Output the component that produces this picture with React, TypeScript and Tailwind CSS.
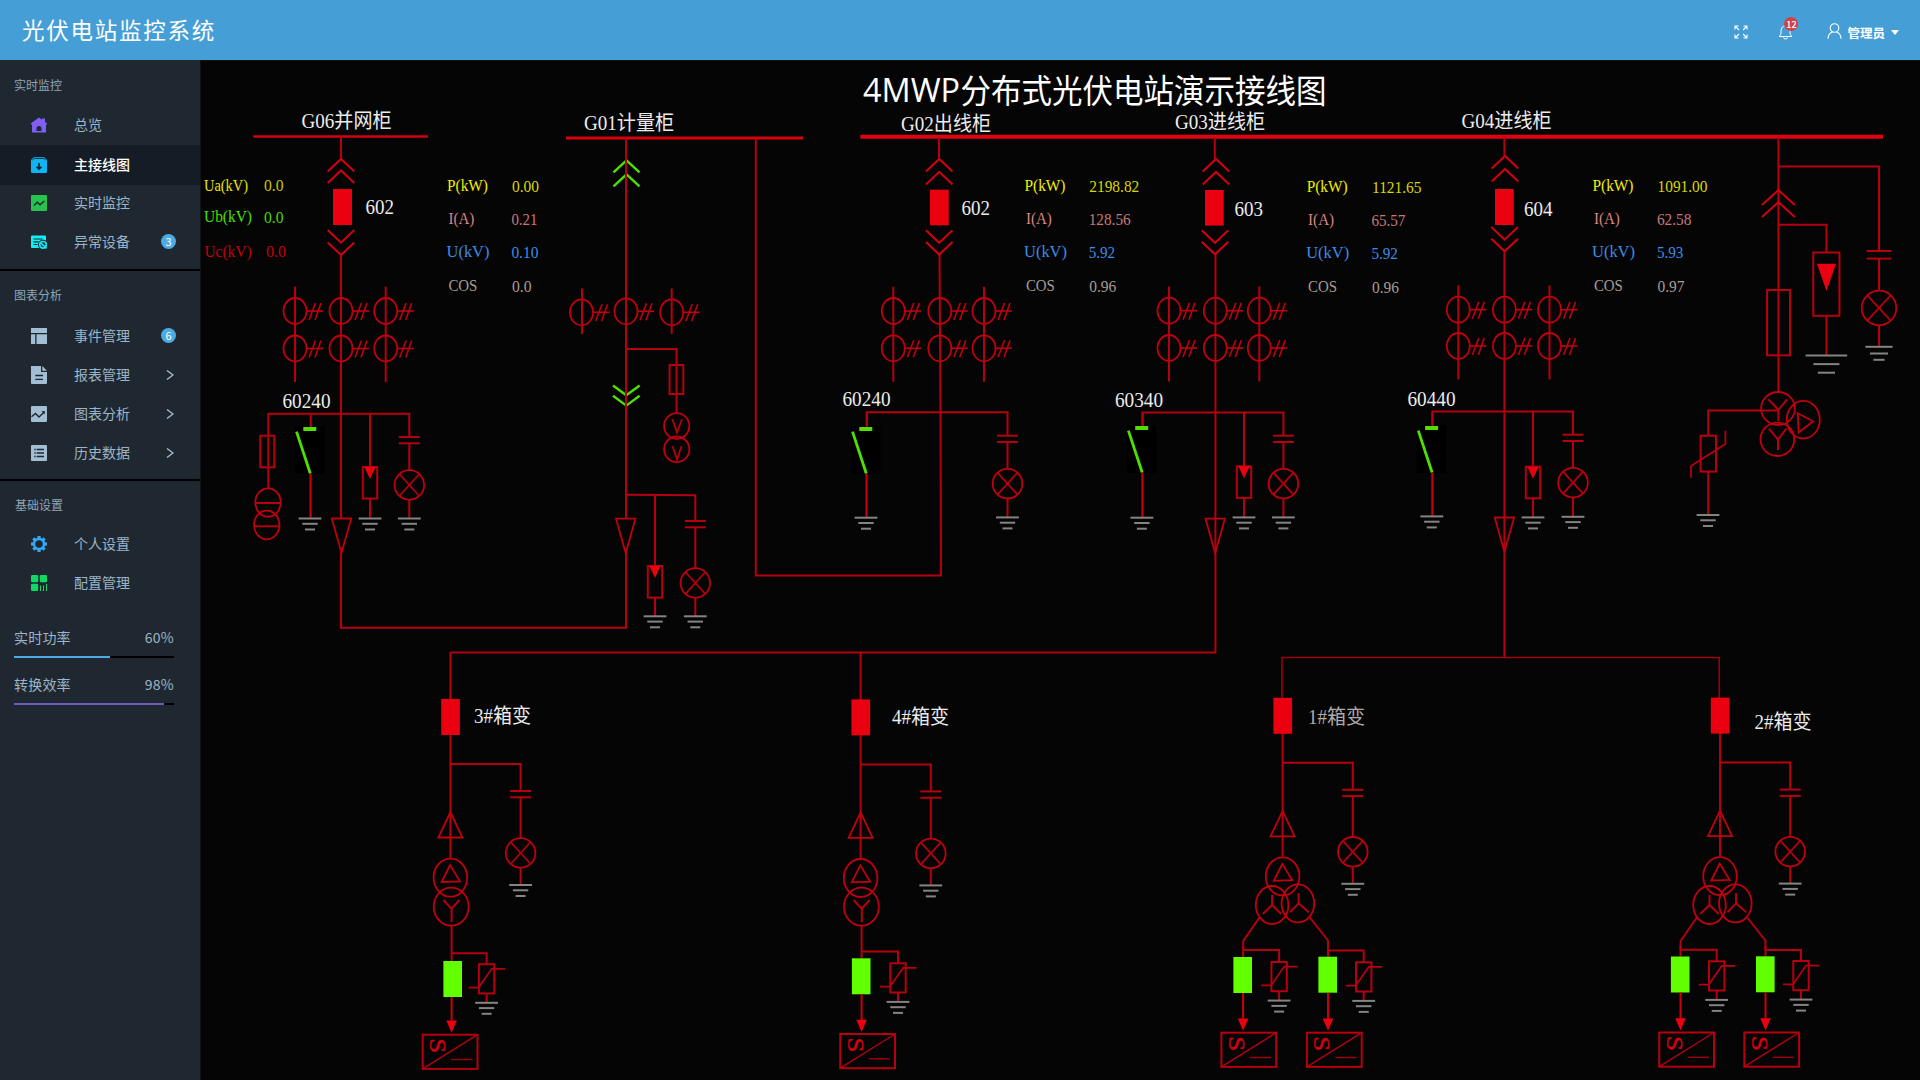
import React from "react";

const RED = "#b4000f";
const HOT = "#eb000f";
const GREEN = "#4fe000";
const BOX_GREEN = "#62ff00";
const GREY = "#848484";
const CJK = '"Noto Sans CJK SC", sans-serif';
const SERIF = '"Liberation Serif", "Noto Sans CJK SC", serif';

type Pt = [number, number];

const L = ({ p, c = RED, w = 2 }: { p: Pt[]; c?: string; w?: number }) => (
  <polyline points={p.map((q) => q.join(",")).join(" ")} fill="none" stroke={c} strokeWidth={w} />
);

const Rect = ({ x1, y1, x2, y2 }: { x1: number; y1: number; x2: number; y2: number }) => (
  <rect x={x1} y={y1} width={x2 - x1} height={y2 - y1} fill="none" stroke={RED} strokeWidth={2} />
);

const Block = ({ x1, y1, x2, y2, c = HOT }: { x1: number; y1: number; x2: number; y2: number; c?: string }) => (
  <rect x={x1} y={y1} width={x2 - x1} height={y2 - y1} fill={c} />
);

const Oval = ({ x, y, rx, ry }: { x: number; y: number; rx: number; ry: number }) => (
  <ellipse cx={x} cy={y} rx={rx} ry={ry} fill="none" stroke="#c0000e" strokeWidth={1.8} />
);

const Label = ({ x, y, w, s, c = "#ececec", f = SERIF, children }: {
  x: number; y: number; w: number; s: number; c?: string; f?: string; children: string;
}) => (
  <text x={x} y={y} textLength={w} lengthAdjust="spacingAndGlyphs" fontSize={s} fill={c} fontFamily={f}>
    {children}
  </text>
);

const Ground = ({ x, y, h = [11.4, 7.7, 5], d = [5.3, 11] }: { x: number; y: number; h?: number[]; d?: number[] }) => (
  <g>
    <L p={[[x - h[0], y], [x + h[0], y]]} c={GREY} />
    <L p={[[x - h[1], y + d[0]], [x + h[1], y + d[0]]]} c={GREY} />
    <L p={[[x - h[2], y + d[1]], [x + h[2], y + d[1]]]} c={GREY} />
  </g>
);

const Chevrons = ({ x, ys, up, c = "#d3000f", dx = 13.3, dy = 12.6, w = 2 }: {
  x: number; ys: number[]; up?: boolean; c?: string; dx?: number; dy?: number; w?: number;
}) => (
  <g>
    {ys.map((y) => {
      const k = up ? dy : -dy;
      return <L key={y} p={[[x - dx, y + k], [x, y], [x + dx, y + k]]} c={c} w={w} />;
    })}
  </g>
);

const CT = ({ x, y }: { x: number; y: number }) => (
  <g>
    <Oval x={x} y={y} rx={11.5} ry={13} />
    <L p={[[x + 11.5, y], [x + 28, y]]} c="#c0000e" w={1.6} />
    <L p={[[x + 14, y + 9], [x + 20.5, y - 8]]} c="#c0000e" w={1.6} />
    <L p={[[x + 20, y + 9], [x + 26, y - 8]]} c="#c0000e" w={1.6} />
  </g>
);

const CTBank = ({ xs, y1, y2 }: { xs: number[]; y1: number; y2: number }) => (
  <g>
    {xs.map((x, i) => (
      <g key={x}>
        {i !== 1 && <L p={[[x, y1 - 24.3], [x, y2 + 33.5]]} />}
        <CT x={x} y={y1} />
        <CT x={x} y={y2} />
      </g>
    ))}
  </g>
);

const Arrester = ({ x, top, y, ground }: { x: number; top: number; y: number; ground: number }) => (
  <g>
    <L p={[[x, top], [x, y]]} />
    <Rect x1={x - 7.2} y1={y} x2={x + 7.2} y2={y + 31.6} />
    <polygon points={`${x - 5.6},${y} ${x + 5.6},${y} ${x},${y + 12}`} fill={HOT} />
    <L p={[[x, y + 31.6], [x, ground]]} />
    <Ground x={x} y={ground} />
  </g>
);

const Lamp = ({ x, top, cap, gap = 6.3, y, ground, r = 14.8, plate = 10.5, big }: {
  x: number; top: number; cap: number; gap?: number; y: number; ground: number; r?: number; plate?: number; big?: boolean;
}) => {
  const k = r * 0.66;
  return (
    <g>
      <L p={[[x, top], [x, cap]]} />
      <L p={[[x - plate, cap], [x + plate, cap]]} />
      <L p={[[x - plate, cap + gap], [x + plate, cap + gap]]} />
      <L p={[[x, cap + gap], [x, y - r]]} />
      <Oval x={x} y={y} rx={r} ry={r} />
      <L p={[[x - k, y - k - 1], [x + k, y + k + 1]]} w={1.8} />
      <L p={[[x + k, y - k - 1], [x - k, y + k + 1]]} w={1.8} />
      <L p={[[x, y + r], [x, ground]]} />
      {big ? <Ground x={x} y={ground} h={[13.6, 9, 5.6]} d={[6.7, 13]} /> : <Ground x={x} y={ground} />}
    </g>
  );
};

const EarthSwitch = ({ x, top, y, ground }: { x: number; top: number; y: number; ground: number }) => (
  <g>
    <Block x1={x - 15.5} y1={y - 3} x2={x + 14} y2={y + 45} c="#000" />
    <L p={[[x + 0.3, top], [x + 0.3, y]]} />
    <Block x1={x - 7.2} y1={y - 2} x2={x + 5.8} y2={y + 2} c={GREEN} />
    <L p={[[x - 14, y + 2.6], [x - 0.2, y + 44.5]]} c={GREEN} w={2.8} />
    <L p={[[x, y + 44.5], [x, ground]]} c="#c8000f" />
    <Ground x={x - 0.5} y={ground} />
  </g>
);

const Cone = ({ x, y, h = 34.5 }: { x: number; y: number; h?: number }) => (
  <polygon points={`${x - 9.7},${y} ${x + 9.7},${y} ${x},${y + h}`} fill="none" stroke="#c0000e" strokeWidth={1.8} />
);

const Inverter = ({ x, from, branch, gx, gy, vx, vy, bx, by }: {
  x: number; from: number; branch: number; gx: number; gy: number; vx: number; vy: number; bx: number; by: number;
}) => (
  <g>
    <L p={[[x, from], [x, gy]]} />
    <L p={[[x, branch], [vx, branch], [vx, vy]]} />
    <Rect x1={vx - 7.7} y1={vy} x2={vx + 7.7} y2={vy + 29.2} />
    <L p={[[vx - 18, vy + 23.4], [vx - 8, vy + 23.4], [vx + 5, vy + 4.6], [vx + 18.5, vy + 4.6]]} w={1.8} />
    <L p={[[vx, vy + 29.2], [vx, vy + 38.4]]} />
    <Ground x={vx} y={vy + 38.6} />
    <Block x1={gx - 9.3} y1={gy} x2={gx + 9.3} y2={gy + 36} c={BOX_GREEN} />
    <L p={[[x, gy + 36], [x, by - 14]]} c="#c8000f" />
    <polygon points={`${x - 5.3},${by - 14.3} ${x + 5.3},${by - 14.3} ${x},${by - 2}`} fill={HOT} />
    <Rect x1={bx - 27.4} y1={by} x2={bx + 27.4} y2={by + 34.2} />
    <L p={[[bx - 27.4, by + 34.2], [bx + 27.4, by]]} w={1.4} />
    <L p={[[bx + 1, by + 24.8], [bx + 22.3, by + 24.8]]} w={1.5} c="#98000c" />
    <text
      transform={`translate(${bx - 20},${by + 3.6}) rotate(90)`}
      fontSize={24}
      textLength={15}
      lengthAdjust="spacingAndGlyphs"
      fill="#d3000f"
      stroke="#d3000f"
      strokeWidth={0.4}
      fontFamily={SERIF}
    >
      S
    </text>
  </g>
);

const BoxFeeder = ({ x, top, dy = 0 }: { x: number; top: number; dy?: number }) => (
  <g>
    <L p={[[x, top], [x, 858 + dy]]} />
    <Block x1={x - 9.2} y1={699 + dy} x2={x + 9.5} y2={735 + dy} />
    <L p={[[x, 764 + dy], [x + 70.2, 764 + dy]]} />
    <Lamp x={x + 70.2} top={763 + dy} cap={791 + dy} y={853 + dy} ground={885 + dy} />
    <polygon
      points={`${x},${812 + dy} ${x - 12},${837.5 + dy} ${x + 12},${837.5 + dy}`}
      fill="none" stroke="#c0000e" strokeWidth={1.8}
    />
    <Oval x={x} y={877.6 + dy} rx={16.8} ry={19} />
    <polygon
      points={`${x - 0.3},${865 + dy} ${x - 8.8},${882 + dy} ${x + 9.6},${881.3 + dy}`}
      fill="none" stroke="#c0000e" strokeWidth={1.8}
    />
  </g>
);

const TwoWinding = ({ x }: { x: number }) => (
  <g>
    <Oval x={x + 0.8} y={906.7} rx={17.4} ry={19} />
    <L p={[[x - 7, 900], [x + 1.2, 908.7], [x + 9, 900]]} />
    <L p={[[x + 1.2, 908], [x + 1.2, 922]]} />
  </g>
);

const ThreeWinding = ({ x }: { x: number }) => (
  <g>
    <Oval x={x - 10.5} y={905} rx={16.3} ry={19} />
    <Oval x={x + 15.3} y={903.4} rx={16.3} ry={19} />
    <L p={[[x - 10.5, 895], [x - 10.5, 905.5]]} />
    <L p={[[x - 19.8, 914], [x - 10.5, 905], [x - 1.4, 914]]} />
    <L p={[[x + 16, 893], [x + 16, 904]]} />
    <L p={[[x + 7.4, 912.3], [x + 16, 903.3], [x + 26.2, 912.3]]} />
    <L p={[[x - 23.2, 917.5], [x - 39.4, 941], [x - 39.4, 950]]} />
    <L p={[[x + 26.8, 917], [x + 45.4, 940.5], [x + 45.4, 950]]} />
  </g>
);

const Readings = ({ x, vx, y, values }: { x: number; vx: number; y: number; values: [string, number][] }) => {
  const rows: [string, number, number, string, string, number][] = [
    ["P(kW)", 0, 41, "#f0f000", "#d8d800", 0],
    ["I(A)", 1.4, 26, "#d98484", "#c87878", 32.3],
    ["U(kV)", -0.5, 43, "#3c8ce6", "#3c8ce6", 66],
    ["COS", 1.4, 29, "#a89c94", "#a89c94", 100],
  ];
  return (
    <g>
      {rows.map(([t, dx, w, c, vc, dy], i) => (
        <g key={t}>
          <Label x={x + dx} y={y + dy} w={w} s={17} c={c}>{t}</Label>
          <Label x={vx + (i === 1 || i === 2 ? -0.6 : 0)} y={y + dy + (i === 3 ? 0.3 : 1)} w={values[i][1]} s={17} c={vc}>
            {values[i][0]}
          </Label>
        </g>
      ))}
    </g>
  );
};

const Diagram = () => (
  <svg className="block h-full w-full" viewBox="201 61 1719 1019" preserveAspectRatio="none">
    <Label x={863} y={101.7} w={97} s={33} c="#ffffff" f={'"Open Sans", sans-serif'}>4MWP</Label>
    <Label x={960.5} y={102.5} w={366} s={32.5} c="#ffffff" f={CJK}>分布式光伏电站演示接线图</Label>
    <Label x={301.5} y={128.3} w={90} s={20}>G06并网柜</Label>
    <Label x={584} y={129.5} w={90} s={20}>G01计量柜</Label>
    <Label x={901} y={130.8} w={90} s={20}>G02出线柜</Label>
    <Label x={1175} y={128.6} w={90} s={20}>G03进线柜</Label>
    <Label x={1461.5} y={127.5} w={90} s={20}>G04进线柜</Label>

    {/* G06 */}
    <L p={[[253.3, 136.5], [428, 136.5]]} c="#d3000f" w={2.4} />
    <L p={[[341, 137], [341, 159]]} />
    <Chevrons x={341} ys={[159, 170.5]} up />
    <Block x1={333} y1={189} x2={352} y2={225} />
    <Chevrons x={341} ys={[242.7, 255]} />
    <Label x={365.5} y={214.3} w={28.5} s={20}>602</Label>
    <Label x={204} y={190.5} w={44} s={17} c="#e6e600">Ua(kV)</Label>
    <Label x={264} y={190.8} w={19.5} s={17} c="#c8c800">0.0</Label>
    <Label x={204} y={222.4} w={48} s={17} c="#48e000">Ub(kV)</Label>
    <Label x={264} y={223} w={19.5} s={17} c="#48d800">0.0</Label>
    <Label x={204.5} y={256.7} w={47} s={17} c="#c4000e">Uc(kV)</Label>
    <Label x={266} y={257} w={20} s={17} c="#c4000e">0.0</Label>
    <Readings x={447} vx={512} y={191.2} values={[["0.00", 27], ["0.21", 26], ["0.10", 27], ["0.0", 19.5]]} />
    <L p={[[341, 255], [341, 518.5]]} />
    <CTBank xs={[295, 341, 385.7]} y1={311} y2={348.5} />
    <Label x={282.5} y={407.6} w={48} s={20}>60240</Label>
    <L p={[[268.3, 488], [268.3, 413.7], [410, 413.7]]} />
    <Rect x1={260.3} y1={435.7} x2={274.3} y2={467.3} />
    <Oval x={268} y={502.5} rx={12.7} ry={14.2} />
    <Oval x={266.7} y={525} rx={12.7} ry={14.3} />
    <L p={[[255.5, 503], [280.5, 503]]} />
    <L p={[[254.5, 526.3], [279, 526.3]]} />
    <EarthSwitch x={310.5} top={413.7} y={429} ground={518.5} />
    <Cone x={341.5} y={518.5} />
    <Arrester x={370} top={413.7} y={467} ground={518.5} />
    <Lamp x={409.3} top={413} cap={437} y={485} ground={518.5} />
    <L p={[[341, 552], [341, 627.7], [626, 627.7], [626, 552]]} />

    {/* G01 */}
    <L p={[[566, 138], [803, 138]]} c="#d8000f" w={3} />
    <Chevrons x={626.5} ys={[160.3, 174.3]} up c={GREEN} dx={13} dy={12} w={2.4} />
    <Chevrons x={626.3} ys={[395.3, 405.6]} c={GREEN} dx={13.3} dy={9.8} w={2.4} />
    <L p={[[626, 138], [626, 518.5]]} />
    <L p={[[582, 288.5], [582, 334]]} />
    <L p={[[671.7, 288.5], [671.7, 334]]} />
    <CT x={581.5} y={312.3} />
    <CT x={626} y={311.3} />
    <CT x={671.7} y={312.3} />
    <L p={[[626, 349], [676.5, 349], [676.5, 413]]} />
    <Rect x1={669.6} y1={365} x2={683.3} y2={394} />
    <Oval x={676.7} y={426} rx={12.6} ry={12.8} />
    <Oval x={676.7} y={449.3} rx={12.6} ry={12.8} />
    <L p={[[672.3, 419], [677, 432.5], [682, 419]]} w={1.8} />
    <L p={[[672.6, 446], [677, 459.5], [681.6, 446]]} w={1.8} />
    <L p={[[626, 494.7], [696, 495.2]]} />
    <Cone x={625.7} y={518.7} />
    <Arrester x={655} top={495} y={566} ground={616.3} />
    <Lamp x={695.3} top={495} cap={521} y={583} ground={616.3} />
    <L p={[[755.8, 138], [755.8, 575.5], [941, 575.5], [940.5, 412], [939.5, 255]]} />

    {/* main busbar */}
    <L p={[[860.3, 136.7], [1883, 136.7]]} c="#e0000f" w={4} />

    {/* G02 */}
    <L p={[[939, 137], [939, 159]]} />
    <Chevrons x={939.2} ys={[159, 171.8]} up />
    <Block x1={930} y1={189.7} x2={948.7} y2={225.3} />
    <Chevrons x={939.2} ys={[242.8, 254.6]} />
    <Label x={961.5} y={215} w={28.5} s={20}>602</Label>
    <CTBank xs={[893.3, 939.8, 984]} y1={311} y2={348.3} />
    <Label x={842.5} y={405.5} w={48} s={20}>60240</Label>
    <L p={[[866.7, 430], [866.7, 412.3], [1008.5, 412.3]]} />
    <EarthSwitch x={866.5} top={412.3} y={429} ground={517.7} />
    <Lamp x={1007.5} top={412} cap={435.7} y={483.7} ground={517.4} />
    <Readings x={1024.5} vx={1089.3} y={191.2} values={[["2198.82", 50], ["128.56", 42], ["5.92", 26.5], ["0.96", 27]]} />

    {/* G03 */}
    <L p={[[1214.8, 137], [1214.8, 159]]} />
    <Chevrons x={1216} ys={[159, 172]} up />
    <Block x1={1205} y1={190} x2={1223.7} y2={225.6} />
    <Chevrons x={1215} ys={[242.8, 254.3]} />
    <Label x={1234.5} y={216.3} w={28.5} s={20}>603</Label>
    <L p={[[1215.4, 254], [1215.4, 652.5], [450.3, 652.5]]} />
    <CTBank xs={[1169, 1215.3, 1259.3]} y1={310.7} y2={348} />
    <Label x={1115} y={406.5} w={48} s={20}>60340</Label>
    <L p={[[1142.4, 430], [1142.4, 412.4], [1284.3, 412.4]]} />
    <EarthSwitch x={1142.4} top={412.4} y={428} ground={517.7} />
    <Cone x={1215.2} y={518.7} />
    <Arrester x={1244} top={412.4} y={466.3} ground={517.4} />
    <Lamp x={1283.4} top={412} cap={435.7} y={483.7} ground={517.4} />
    <Readings x={1306.7} vx={1372} y={192.2} values={[["1121.65", 49.5], ["65.57", 34], ["5.92", 26.5], ["0.96", 27]]} />

    {/* G04 */}
    <L p={[[1504.4, 137], [1504.4, 156]]} />
    <Chevrons x={1505} ys={[156, 169]} up />
    <Block x1={1495} y1={189} x2={1513.7} y2={225} />
    <Chevrons x={1504.6} ys={[239.7, 251.3]} />
    <Label x={1524} y={215.5} w={28.5} s={20}>604</Label>
    <L p={[[1504.4, 252], [1504.4, 657.3]]} />
    <CTBank xs={[1458.3, 1504.4, 1549.5]} y1={309.7} y2={346} />
    <Label x={1407.5} y={406} w={48} s={20}>60440</Label>
    <L p={[[1432.3, 430], [1432.3, 411.5], [1574, 411.5]]} />
    <EarthSwitch x={1432.3} top={411.5} y={428} ground={516.4} />
    <Cone x={1504.4} y={517.5} />
    <Arrester x={1533} top={411.5} y={466.7} ground={517.4} />
    <Lamp x={1573} top={411} cap={434.7} y={482.7} ground={516.8} />
    <Readings x={1592.5} vx={1657.5} y={191.2} values={[["1091.00", 50], ["62.58", 34.5], ["5.93", 26.5], ["0.97", 27]]} />

    {/* voltage transformer bay */}
    <L p={[[1778.4, 137], [1778.4, 392]]} />
    <L p={[[1778.4, 166.6], [1880, 166.6]]} />
    <Lamp x={1879} top={166} cap={251} gap={7.6} y={308} ground={346.8} r={17.3} plate={12.4} big />
    <Chevrons x={1778.4} ys={[190, 202]} up dx={16.4} dy={15} />
    <L p={[[1778.4, 224.7], [1826.4, 224.7], [1826.4, 252.5]]} />
    <Rect x1={1813.3} y1={252.5} x2={1839.4} y2={315.8} />
    <polygon points="1817,263.8 1836,263.8 1826.5,291" fill={HOT} />
    <L p={[[1826.4, 316], [1826.4, 355]]} />
    <Ground x={1826.4} y={355.4} h={[20.8, 13, 8.6]} d={[8.7, 17.3]} />
    <Rect x1={1767} y1={290} x2={1790} y2={355.3} />
    <Oval x={1778} y={408.5} rx={16.9} ry={16.5} />
    <Oval x={1777.4} y={439.3} rx={16.9} ry={16.7} />
    <Oval x={1803.3} y={419.7} rx={16.5} ry={18.8} />
    <L p={[[1768.4, 399.3], [1778.4, 410], [1787, 399.3]]} />
    <L p={[[1778.4, 409], [1778.4, 421]]} />
    <L p={[[1769, 428.7], [1778, 439.7], [1786.3, 428.7]]} />
    <L p={[[1778, 439], [1778, 450.3]]} />
    <polygon points="1797.7,413.3 1813.2,421.3 1798.7,432.5" fill="none" stroke="#c0000e" strokeWidth={1.8} />
    <L p={[[1778.4, 410.4], [1708.2, 410.4], [1708.2, 435.7]]} />
    <Rect x1={1700.6} y1={435.7} x2={1716} y2={471.6} />
    <L p={[[1691, 477.7], [1691, 466], [1725.4, 444], [1725.4, 430.7]]} w={1.8} />
    <L p={[[1708.2, 471.6], [1708.2, 515]]} />
    <Ground x={1708} y={515} />

    {/* 3# and 4# transformers */}
    <BoxFeeder x={450.4} top={652} />
    <TwoWinding x={450.4} />
    <Label x={474} y={723} w={57} s={20}>3#箱变</Label>
    <Inverter x={451.6} from={926} branch={953.3} gx={452.7} gy={961} vx={486.6} vy={964.2} bx={450.1} by={1034.7} />
    <BoxFeeder x={860.6} top={652} dy={0.4} />
    <TwoWinding x={860.6} />
    <Label x={892} y={724.2} w={57} s={20}>4#箱变</Label>
    <Inverter x={861.6} from={926} branch={951.5} gx={861.2} gy={958.3} vx={898} vy={963.3} bx={867.6} by={1034} />

    {/* 1# and 2# transformers */}
    <L p={[[1282, 698], [1282, 657.4], [1719.2, 657.4], [1719.2, 698]]} w={1.5} c="#a0000d" />
    <BoxFeeder x={1282.6} top={730} dy={-1.2} />
    <ThreeWinding x={1282.6} />
    <Label x={1308} y={724} w={57} s={20} c="#b0aaa8">1#箱变</Label>
    <Inverter x={1243.1} from={946} branch={950} gx={1242.7} gy={957} vx={1279.1} vy={962} bx={1248.8} by={1032.7} />
    <Inverter x={1328} from={946} branch={950.4} gx={1327.7} gy={956.7} vx={1363.7} vy={962.3} bx={1334.3} by={1032.7} />
    <BoxFeeder x={1720} top={730} dy={-1.4} />
    <ThreeWinding x={1720} />
    <Label x={1754.5} y={728.8} w={57} s={20}>2#箱变</Label>
    <Inverter x={1680.5} from={946} branch={949.7} gx={1680.2} gy={956.5} vx={1716.7} vy={961.3} bx={1686.6} by={1032.5} />
    <Inverter x={1765.5} from={946} branch={950} gx={1765.3} gy={956.3} vx={1801} vy={961} bx={1771.7} by={1032.5} />
  </svg>
);

const ic = "h-4 w-4 shrink-0";
const BG = "#1f2831";
const STEEL = "#a3bdd3";

const icons: Record<string, React.ReactNode> = {
  home: (
    <svg className={ic} viewBox="0 0 16 16">
      <path fill="#7f5ff0" d="M8 0.5 11 2.7V1.5h3V5L16 6.3V7.5h-1V15.5H1V7.5H0V6.3Z" />
      <path fill={BG} d="M5.5 14V11.5a2.5 2.5 0 0 1 5 0V14Z" />
    </svg>
  ),
  archive: (
    <svg className={ic} viewBox="0 0 16 16">
      <path fill="#0fb4f2" d="M3 0h10l3 3v11.5a1.5 1.5 0 0 1-1.5 1.5h-13A1.5 1.5 0 0 1 0 14.5V3Z" />
      <path d="M1.5 3 3.5 1.3h9L14.5 3" fill="none" stroke="#161c25" strokeWidth="1" />
      <path d="M8 6v6M5.6 9.7 8 12.2l2.4-2.5" fill="none" stroke="#161c25" strokeWidth="1.6" />
    </svg>
  ),
  chart: (
    <svg className={ic} viewBox="0 0 16 16">
      <rect width="16" height="16" rx="1" fill="#28c24e" />
      <path d="M3 10.5 6.3 7.3 9 9.8 13.3 6" fill="none" stroke={BG} strokeWidth="1.5" />
    </svg>
  ),
  device: (
    <svg className={ic} viewBox="0 0 16 16">
      <path fill="#0feef5" d="M1 1.5h13a1 1 0 0 1 1 1V14H1a1 1 0 0 1-1-1V2.5a1 1 0 0 1 1-1Z" />
      <path d="M2.5 5h9M2.5 7.8h5M2.5 10.5h4" stroke={BG} strokeWidth="1.2" />
      <circle cx="12" cy="10.8" r="5" fill={BG} />
      <circle cx="12" cy="10.8" r="3.3" fill="none" stroke="#0feef5" strokeWidth="1.7" />
      <path d="M9.5 8.5 15.5 14.5" stroke="#0feef5" strokeWidth="1.7" />
    </svg>
  ),
  layout: (
    <svg className={ic} viewBox="0 0 16 16" fill={STEEL}>
      <path d="M0 0h16v5H0zM0 6.3h4.2V16H0zM5.5 6.3H16V16H5.5z" />
    </svg>
  ),
  file: (
    <svg className="h-[18px] w-4 shrink-0" viewBox="0 0 16 18">
      <path fill={STEEL} d="M0 0h10v6h6v11a1 1 0 0 1-1 1H1a1 1 0 0 1-1-1ZM11.3 0 16 4.7h-4.7Z" />
      <path d="M4.3 9.5H12M4.3 13.3H12" stroke={BG} strokeWidth="1.3" />
    </svg>
  ),
  trend: (
    <svg className={ic} viewBox="0 0 16 16">
      <rect width="16" height="16" rx="1" fill={STEEL} />
      <path d="M0.5 10.8 4.5 7.5 8 11 13 6.2" fill="none" stroke={BG} strokeWidth="1.4" />
      <path d="M10.3 5.3 13.8 5v3.6Z" fill={BG} />
    </svg>
  ),
  list: (
    <svg className={ic} viewBox="0 0 16 16">
      <rect width="16" height="16" rx="1" fill={STEEL} />
      <path d="M5.7 4.5H13M5.7 8H13M5.7 11.5H13M3.3 4.5h1.4M3.3 8h1.4M3.3 11.5h1.4" stroke={BG} strokeWidth="1.4" />
    </svg>
  ),
  gear: (
    <svg className={ic} viewBox="0 0 16 16">
      <circle cx="8" cy="8" r="5" fill="none" stroke="#33aaf5" strokeWidth="2.5" />
      {[0, 45, 90, 135, 180, 225, 270, 315].map((a) => (
        <rect key={a} x="6.4" y="0" width="3.2" height="2.6" fill="#33aaf5" transform={`rotate(${a} 8 8)`} />
      ))}
    </svg>
  ),
  grid: (
    <svg className={ic} viewBox="0 0 16 16" fill="#0fd964">
      <rect width="7.2" height="7.3" rx="1.2" />
      <rect x="8.8" width="7.2" height="7.3" rx="1.2" />
      <rect y="8.7" width="7.2" height="7.3" rx="1.2" />
      <path d="M9 10.5h1V16H9zM12 10.5h1V16h-1zM15 9h1v7h-1z" />
    </svg>
  ),
};

type Item = { icon: string; text: string; active?: boolean; badge?: string; arrow?: boolean };

const Row = ({ icon, text, active, badge, arrow }: Item) => (
  <div
    className={
      active
        ? "mb-[-2px] flex h-10 items-center bg-[#161c25] pb-px pl-[31px] pr-[26px] font-medium text-white"
        : "flex h-[39px] items-center pl-[31px] pr-[26px] text-[#9db5c8]"
    }
  >
    {icons[icon]}
    <span className="ml-[27px] flex-1 pb-[2px] text-[14px] leading-5">{text}</span>
    {badge && (
      <span className="mr-[-2px] flex h-[15px] w-[15px] items-center justify-center rounded-full bg-[#4babe2] pb-px text-[11px] leading-none text-white">
        {badge}
      </span>
    )}
    {arrow && (
      <svg className="h-[10px] w-2" viewBox="0 0 8 10" fill="none" stroke="#a9c0d2" strokeWidth="1.3">
        <path d="M1 0.5 7 5 1 9.5" />
      </svg>
    )}
  </div>
);

const Meter = ({ text, value, bar }: { text: string; value: number; bar: string }) => (
  <div className="pl-[14px] pr-[26px] text-[14px] leading-5 text-[#9db5c8]">
    <div className="flex justify-between">
      <span className="tracking-[0.2px]">{text}</span>
      <span className="tracking-[0.3px]">{value}%</span>
    </div>
    <div className="mt-[9px] h-[2px] bg-black">
      <div className={bar} />
    </div>
  </div>
);

const Sidebar = () => (
  <aside className="flex w-[200px] shrink-0 flex-col bg-[#1f2831]">
    <section className="h-[209px] pt-[15px]">
      <h2 className="mb-[10px] pl-[14px] text-[12px] leading-5 text-[#8fa5b6]">实时监控</h2>
      <div className="h-10">
        <Row icon="home" text="总览" />
      </div>
      <Row icon="archive" text="主接线图" active />
      <Row icon="chart" text="实时监控" />
      <Row icon="device" text="异常设备" badge="3" />
    </section>
    <section className="h-[210px] border-t-2 border-black pt-[14px]">
      <h2 className="mb-[11px] pl-[14px] text-[12px] leading-5 text-[#8fa5b6]">图表分析</h2>
      <Row icon="layout" text="事件管理" badge="6" />
      <Row icon="file" text="报表管理" arrow />
      <Row icon="trend" text="图表分析" arrow />
      <Row icon="list" text="历史数据" arrow />
    </section>
    <section className="border-t-2 border-black pt-[14px]">
      <h2 className="mb-[9px] pl-[15px] text-[12px] leading-5 text-[#8fa5b6]">基础设置</h2>
      <Row icon="gear" text="个人设置" />
      <Row icon="grid" text="配置管理" />
    </section>
    <div className="mt-[25px] flex flex-col gap-[16px]">
      <Meter text="实时功率" value={60} bar="h-full w-[60%] bg-[#4babe2]" />
      <Meter text="转换效率" value={98} bar="h-full w-[94%] bg-[#6a5cb8]" />
    </div>
  </aside>
);

const Header = () => (
  <header className="flex h-[60px] shrink-0 items-center justify-between bg-[#459fd6] pl-[22px] pr-[21px] text-white">
    <h1 className="pb-[2px] text-[22.5px] font-normal leading-8 tracking-[1.75px]">光伏电站监控系统</h1>
    <div className="flex items-center pt-[4px]">
      <svg className="h-[14px] w-[14px]" viewBox="0 0 14 14" stroke="white" strokeWidth="1.1" fill="none">
        <path d="M1 4.5V1H4.5M1 1 5 5M9.5 1H13V4.5M13 1 9 5M1 9.5V13H4.5M1 13 5 9M9.5 13H13V9.5M13 13 9 9" />
      </svg>
      <div className="relative ml-[30px] h-4 w-[15px]">
        <svg className="h-4 w-[15px]" viewBox="0 0 15 16" stroke="white" strokeWidth="1" fill="none">
          <path d="M1 12.5C2.7 11.5 3 10 3 7.5 3 4 4.5 2 7.5 2S12 4 12 7.5c0 2.5.3 4 2 5ZM5.5 13.5a2 1.4 0 0 0 4 0" />
        </svg>
        <span className="absolute left-[6px] top-[-7px] flex h-[14px] w-[14px] items-center justify-center rounded-full bg-[#cf424a] text-[9px] font-medium leading-none">
          12
        </span>
      </div>
      <svg className="ml-[34px] mt-[-3px] h-4 w-[15px]" viewBox="0 0 15 16" stroke="white" strokeWidth="1.1" fill="none">
        <circle cx="7.5" cy="5" r="4.3" />
        <path d="M1 15.8C1 11.5 3.5 9.6 5.5 8.9M9.5 8.9c2 .7 4.5 2.6 4.5 6.9" />
      </svg>
      <span className="ml-[5px] pt-[2px] text-[12.5px] font-bold leading-5">管理员</span>
      <svg className="ml-[6px] mt-px h-[5px] w-2" viewBox="0 0 8 5" fill="white">
        <path d="M0 0h8L4 5Z" />
      </svg>
    </div>
  </header>
);

export default function App() {
  return (
    <div className="flex h-screen w-full flex-col overflow-hidden bg-[#050505] [font-family:'Noto_Sans_CJK_SC',sans-serif]">
      <Header />
      <div className="flex min-h-0 flex-1">
        <Sidebar />
        <main className="min-w-0 flex-1 border-l border-t border-[#141414] bg-[#050505]">
          <Diagram />
        </main>
      </div>
    </div>
  );
}
